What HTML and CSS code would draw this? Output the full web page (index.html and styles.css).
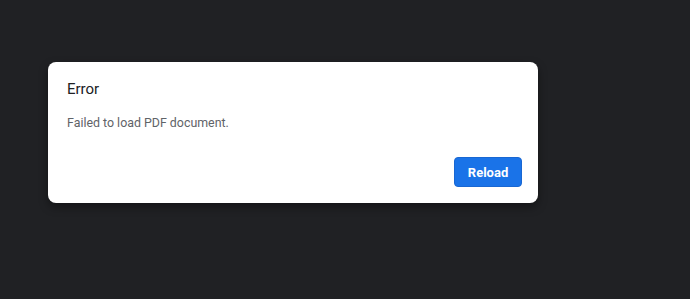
FILE: index.html
```html
<!DOCTYPE html>
<html lang="en">
<head>
    <meta charset="UTF-8">
    <title>PDF Viewer</title>
    <link rel="stylesheet" href="styles.css">
</head>
<body>
    <div class="viewer">
        <div class="dialog">
            <div class="dialog-title">Error</div>
            <div class="dialog-body">Failed to load PDF document.</div>
            <div class="dialog-buttons">
                <button class="action-button">Reload</button>
            </div>
        </div>
    </div>
</body>
</html>
```
FILE: styles.css
```css
/* Viewer */
body {
    margin: 0;
    background: #202124;
    font-family: Roboto, "Liberation Sans", sans-serif;
    min-height: 100vh;
}

.viewer {
    padding: 62px 0 0 48px;
}

/* Dialog */
.dialog {
    width: 490px;
    height: 141px;
    box-sizing: border-box;
    background: #fff;
    border-radius: 8px;
    box-shadow: 0 4px 10px rgba(0, 0, 0, 0.4);
    display: flex;
    flex-direction: column;
}

.dialog-title {
    font-size: 15px;
    color: #202124;
    padding: 17px 20px 0 19px;
    line-height: 20px;
}

.dialog-body {
    font-size: 12.4px;
    color: #5f6368;
    padding: 14px 20px 0 19px;
    line-height: 20px;
}

.dialog-buttons {
    margin-top: auto;
    display: flex;
    justify-content: flex-end;
    padding: 0 16px 16px 16px;
}

.action-button {
    background-color: #1a73e8;
    border: 1px solid #1967d2;
    color: #fff;
    font-family: Roboto, "Liberation Sans", sans-serif;
    font-size: 13px;
    font-weight: 700;
    height: 30px;
    width: 68px;
    border-radius: 4px;
    cursor: pointer;
}
```
